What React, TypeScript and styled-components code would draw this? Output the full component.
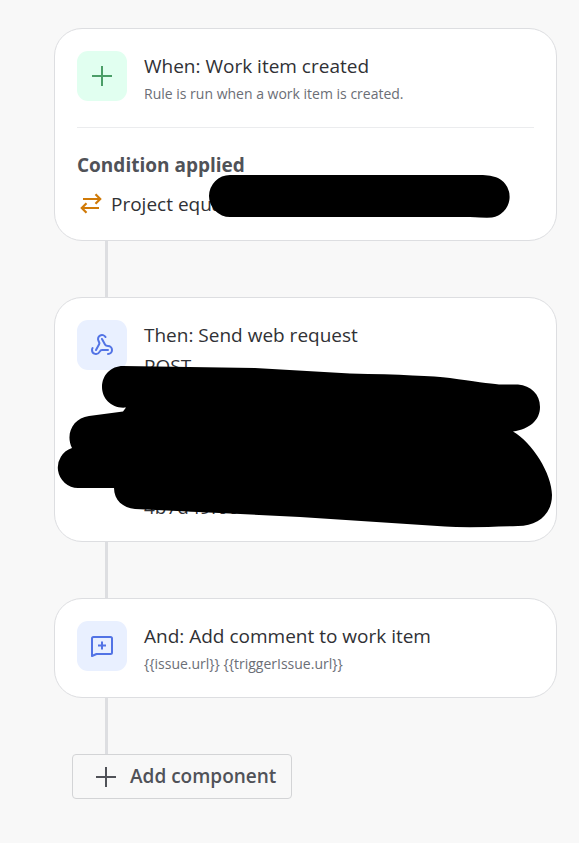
import React from "react";
import styled, { createGlobalStyle } from "styled-components";
import { Webhook } from "lucide-react";

const GlobalStyle = createGlobalStyle`
  * { box-sizing: border-box; }
  body {
    margin: 0;
    background: #f8f8f8;
    color: #303135;
    font-family: "Segoe UI", "Open Sans", "Noto Sans", sans-serif;
    font-size: 19px;
    line-height: 28px;
  }
`;

const Flow = styled.main`
  display: flex;
  flex-direction: column;
  padding: 28px 22px 44px 54px;
`;

const Card = styled.section`
  position: relative;
  padding: 22px 22px 20px;
  background: #fff;
  border: 1px solid #dddee1;
  border-radius: 28px;
`;

const Step = styled.div`
  display: flex;
  align-items: flex-start;
  gap: 17px;
`;

const Tile = styled.div<{ $tone: "green" | "blue" }>`
  display: flex;
  flex: none;
  align-items: center;
  justify-content: center;
  width: 50px;
  height: 50px;
  border-radius: 11px;
  background: ${(p) => (p.$tone === "green" ? "#e1fff0" : "#e9f0ff")};
  color: ${(p) => (p.$tone === "green" ? "#4b9e68" : "#5273e5")};
`;

const StepText = styled.div`
  flex: 1;
  min-width: 0;
  padding-top: 1px;
`;

const Title = styled.h2`
  margin: 0 0 1px;
  font-size: 19px;
  font-weight: 400;
`;

const Detail = styled.p`
  margin: 0;
  color: #6b6e76;
  font-size: 14px;
  line-height: 26px;
`;

const Request = styled.div`
  display: flex;
  flex-direction: column;
  justify-content: space-between;
  min-height: 169px;
  margin-top: 3px;
`;

const Divider = styled.hr`
  margin: 20px 0 23px;
  border: 0;
  border-top: 1px solid #ebecee;
`;

const ConditionHeading = styled.h3`
  margin: 0 0 11px;
  color: #505258;
  font-size: 19px;
  font-weight: 700;
`;

const Condition = styled.div`
  display: flex;
  align-items: center;
  gap: 6px;
  margin-bottom: 2px;
`;

const Connector = styled.div`
  width: 3px;
  height: 56px;
  margin-left: 51px;
  background: #dddee1;
`;

const Redaction = styled.svg`
  position: absolute;
  top: 0;
  left: 0;
  pointer-events: none;
`;

const AddButton = styled.button`
  display: flex;
  align-self: flex-start;
  align-items: center;
  gap: 12px;
  margin-left: 18px;
  padding: 8px 15px 8px 21px;
  border: 1px solid #d3d4d6;
  border-radius: 4px;
  background: transparent;
  color: #505258;
  font: inherit;
  font-weight: 600;
  line-height: 27px;
`;

const PlusIcon = () => (
  <svg width="24" height="24" viewBox="0 0 24 24" fill="none" stroke="currentColor" strokeWidth="2" aria-hidden="true">
    <path d="M12 2v20M2 12h20" />
  </svg>
);

const SwapIcon = () => (
  <svg width="28" height="28" viewBox="0 0 28 28" fill="none" stroke="#d07a08" strokeWidth="2.2" aria-hidden="true">
    <path d="M6 9h17M18.500 4.300 23.200 9l-4.700 4.700M22 18H5M9.500 13.300 4.800 18l4.700 4.700" />
  </svg>
);

const CommentAddIcon = () => (
  <svg width="24" height="24" viewBox="0 0 24 24" fill="none" stroke="currentColor" strokeWidth="2" strokeLinejoin="round" aria-hidden="true">
    <path d="M2 22V4.500A1.500 1.500 0 0 1 3.500 3h17A1.500 1.500 0 0 1 22 4.500v14a1.500 1.500 0 0 1-1.500 1.500H6.500z" />
    <path d="M12 7.500v8M8 11.500h8" />
  </svg>
);

export default function App() {
  return (
    <>
      <GlobalStyle />
      <Flow>
        <Card>
          <Step>
            <Tile $tone="green"><PlusIcon /></Tile>
            <StepText>
              <Title>When: Work item created</Title>
              <Detail>Rule is run when a work item is created.</Detail>
            </StepText>
          </Step>
          <Divider />
          <ConditionHeading>Condition applied</ConditionHeading>
          <Condition>
            <SwapIcon />
            <span>Project equals</span>
          </Condition>
          <Redaction width="460" height="190" viewBox="0 0 460 190" aria-hidden="true">
            <path d="M175 146H425C433 146 438 147 443 149A21 21 0 0 1 437 188.500Q431 189 415 188H175A21 21 0 0 1 175 146Z" />
          </Redaction>
        </Card>
        <Connector />
        <Card>
          <Step>
            <Tile $tone="blue"><Webhook size={24} aria-hidden="true" /></Tile>
            <StepText>
              <Title>Then: Send web request</Title>
              <Request>
                <span>POST</span>
                <span>4b7d49f66c</span>
              </Request>
            </StepText>
          </Step>
          <Redaction width="500" height="232" viewBox="55 298 500 232" aria-hidden="true">
            <path d="M123 366L255 368L350 373.500Q425 375 450 378Q485 383 499 384.500H518C531 386 540 394 540 407C540 420 530 429 513 431.500C532 442 552 474 552 495C552 514 538 526 518 526Q468 528 445 526.500L300 517L135 509C123 508 114 500 114 488H78A20.500 20.500 0 0 1 72 448C65 434 73 418 89 416L123 411.500L126 407.500C112 409 102 399 102 387C102 375 111 366 123 366Z" />
          </Redaction>
        </Card>
        <Connector />
        <Card>
          <Step>
            <Tile $tone="blue"><CommentAddIcon /></Tile>
            <StepText>
              <Title>And: Add comment to work item</Title>
              <Detail>{"{{issue.url}} {{triggerIssue.url}}"}</Detail>
            </StepText>
          </Step>
        </Card>
        <Connector />
        <AddButton type="button">
          <PlusIcon />
          Add component
        </AddButton>
      </Flow>
    </>
  );
}
